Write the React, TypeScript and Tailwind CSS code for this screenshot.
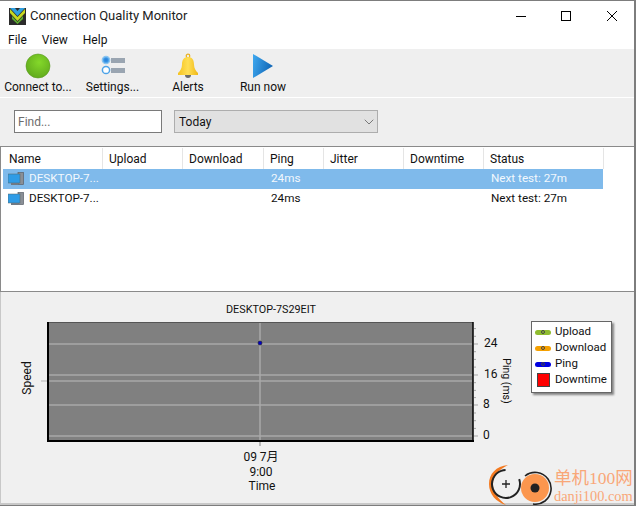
import { ChevronDown } from "lucide-react";

const uiFont = "font-['Roboto','Noto_Sans_CJK_SC',sans-serif]";

const columns = [
  { name: "Name", width: "w-[100px]" },
  { name: "Upload", width: "w-[80px]" },
  { name: "Download", width: "w-[81px]" },
  { name: "Ping", width: "w-[60px]" },
  { name: "Jitter", width: "w-[80px]" },
  { name: "Downtime", width: "w-[80px]" },
  { name: "Status", width: "w-[120px]" },
];

function AppIcon() {
  return (
    <svg width="17" height="17" viewBox="0 0 17 17" className="shrink-0">
      <rect width="17" height="17" fill="#2b2b2b" />
      <path d="M1 0h5l2.500 3L11 0h5L8.500 8z" fill="#2f9fe0" />
      <path d="M1 1l7.500 8L16 1v4l-7.500 8L1 5z" fill="#c6d820" />
      <path d="M3 8l5.500 6L14 8v3l-5.500 5L3 11z" fill="#5fb030" />
    </svg>
  );
}

function WindowButtons() {
  return (
    <div className="ml-auto mr-[17px] flex items-center">
      <svg width="10" height="10" viewBox="0 0 10 10" className="mr-[35px]">
        <path d="M0 5.500h10" stroke="#000" strokeWidth="1" />
      </svg>
      <svg width="10" height="10" viewBox="0 0 10 10" className="mr-[36px]">
        <rect x="0.500" y="0.500" width="9" height="9" fill="none" stroke="#000" strokeWidth="1" />
      </svg>
      <svg width="10" height="10" viewBox="0 0 10 10">
        <path d="M0 0l10 10M10 0L0 10" stroke="#000" strokeWidth="1" />
      </svg>
    </div>
  );
}

function ConnectIcon() {
  return (
    <svg width="26" height="26" viewBox="0 0 26 26">
      <defs>
        <radialGradient id="green" cx="0.55" cy="0.35" r="0.7">
          <stop offset="0" stopColor="#84d82a" />
          <stop offset="1" stopColor="#5fa81c" />
        </radialGradient>
      </defs>
      <circle cx="13" cy="13" r="12" fill="url(#green)" stroke="#5a9a20" strokeWidth="0.600" />
    </svg>
  );
}

function SettingsIcon() {
  return (
    <svg width="26" height="26" viewBox="0 0 26 26">
      <circle cx="6" cy="7" r="3.600" fill="#3f9be8" stroke="#8ac4f0" strokeWidth="1.500" />
      <circle cx="6" cy="7" r="1.800" fill="#2d86dc" />
      <rect x="11" y="5" width="14" height="5" fill="#9aa5b1" />
      <circle cx="6" cy="17" r="3.600" fill="#fff" stroke="#4da3e8" strokeWidth="1.500" />
      <rect x="11" y="15" width="14" height="5" fill="#9aa5b1" />
    </svg>
  );
}

function BellIcon() {
  return (
    <svg width="22" height="26" viewBox="0 0 22 26">
      <defs>
        <linearGradient id="bell" x1="0" y1="0" x2="1" y2="0">
          <stop offset="0" stopColor="#f5c220" />
          <stop offset="0.500" stopColor="#ffdf55" />
          <stop offset="1" stopColor="#f0b818" />
        </linearGradient>
      </defs>
      <circle cx="11" cy="3" r="1.800" fill="none" stroke="#e8b020" strokeWidth="1.200" />
      <path d="M8 22a3 3 0 0 0 6 0z" fill="#6b6b6b" />
      <path d="M11 4c-4.500 0-6 3.500-6 7.500 0 4-2 6.500-4 8.500v2h20v-2c-2-2-4-4.500-4-8.500C17 7.500 15.500 4 11 4z" fill="url(#bell)" />
    </svg>
  );
}

function PlayIcon() {
  return (
    <svg width="20" height="24" viewBox="0 0 20 24">
      <defs>
        <linearGradient id="play" x1="0" y1="0" x2="1" y2="0.300">
          <stop offset="0" stopColor="#3fa9f0" />
          <stop offset="1" stopColor="#1268b8" />
        </linearGradient>
      </defs>
      <path d="M0 0l20 12L0 24z" fill="url(#play)" />
    </svg>
  );
}

function PcIcon() {
  return (
    <svg width="16" height="14" viewBox="0 0 16 14" className="shrink-0">
      <rect x="10" y="0.500" width="5.500" height="12" fill="#8a8f96" stroke="#5b6068" strokeWidth="0.700" />
      <rect x="0" y="2" width="12" height="9" fill="#2f9ce6" stroke="#566" strokeWidth="0.500" />
      <rect x="3" y="11" width="7" height="2" fill="#6f7a85" />
    </svg>
  );
}

function ToolButton({ label, width, children }: { label: string; width: string; children: React.ReactNode }) {
  return (
    <div className={`${width} flex shrink-0 flex-col items-center`}>
      <div className="flex h-[26px] items-center justify-center">{children}</div>
      <span className="whitespace-nowrap leading-[16px]">{label}</span>
    </div>
  );
}

function Row({ selected }: { selected?: boolean }) {
  return (
    <div className={`flex h-5 w-[600px] items-center text-[11.700px] ${selected ? "bg-[#7fbaeb] text-[#f2f8fd]" : ""}`}>
      <div className="flex w-[100px] items-center pl-[5px]">
        <PcIcon />
        <span className="ml-[5px] whitespace-nowrap">DESKTOP-7...</span>
      </div>
      <div className="w-[161px]" />
      <div className="w-[60px] pl-[7px]">24ms</div>
      <div className="w-[160px]" />
      <div className="w-[119px] whitespace-nowrap pl-[7px]">Next test: 27m</div>
    </div>
  );
}

function Chart() {
  const minor = [328.6, 336.3, 351.7, 359.4, 367.1, 382.7, 390.4, 397.6, 413, 420.7, 428.4];
  const major = [344, 375, 405, 436];
  return (
    <svg width="500" height="180" viewBox="20 318 500 180" className="shrink-0 text-[12px]">
      <rect x="47" y="322" width="426" height="119" fill="#808080" />
      {[344, 375, 381, 405, 436].map((y) => (
        <line key={y} x1="49" x2="472" y1={y} y2={y} stroke="#a9a9a9" strokeWidth="1.500" />
      ))}
      <line x1="260" x2="260" y1="323" y2="446" stroke="#a9a9a9" strokeWidth="1.500" />
      <line x1="41" x2="47" y1="381" y2="381" stroke="#b5b5b5" strokeWidth="1" />
      <line x1="47" x2="473" y1="322.500" y2="322.500" stroke="#555" strokeWidth="1" />
      <line x1="48" x2="48" y1="322" y2="442" stroke="#000" strokeWidth="2" />
      <line x1="47" x2="474" y1="441" y2="441" stroke="#000" strokeWidth="2" />
      <line x1="473" x2="473" y1="322" y2="442" stroke="#000" strokeWidth="1.500" />
      {minor.map((y) => (
        <line key={y} x1="474" x2="476" y1={y} y2={y} stroke="#a5a5a5" strokeWidth="1" />
      ))}
      {major.map((y) => (
        <line key={y} x1="474" x2="478" y1={y} y2={y} stroke="#a5a5a5" strokeWidth="1" />
      ))}
      <circle cx="260" cy="343" r="2" fill="#0000c8" stroke="#222" strokeWidth="0.600" />
      <text x="484" y="347" fill="#111">24</text>
      <text x="484" y="378" fill="#111">16</text>
      <text x="483" y="408" fill="#111">8</text>
      <text x="483" y="439" fill="#111">0</text>
      <text x="0" y="0" fill="#111" textAnchor="middle" className="text-[10.500px]" transform="translate(503 381) rotate(90)">Ping (ms)</text>
      <text x="0" y="0" fill="#111" textAnchor="middle" transform="translate(31 378) rotate(-90)">Speed</text>
      <text x="261" y="461" fill="#111" textAnchor="middle">09 7月</text>
      <text x="261" y="476" fill="#111" textAnchor="middle">9:00</text>
      <text x="262" y="490" fill="#111" textAnchor="middle">Time</text>
    </svg>
  );
}

function LegendLine({ color, label }: { color: string; label: string }) {
  return (
    <div className="flex h-4 items-center whitespace-nowrap">
      <span className="relative mr-[4px] h-[5px] w-4 shrink-0 rounded-full" style={{ backgroundColor: color }}>
        <span className="absolute left-[6px] top-[0.500px] h-[4px] w-[4px] rounded-full border border-[#444]" />
      </span>
      {label}
    </div>
  );
}

function Watermark() {
  return (
    <div className="absolute bottom-[-3px] left-[487px] flex h-[42px] items-start">
      <svg width="64" height="42" viewBox="0 0 64 42" className="shrink-0">
        <path d="M20 1C8 2 1 10 1 20c0 10 7 18 17 21C10 35 5 28 5 20 5 12 10 6 20 1z" fill="#f47a20" />
        <circle cx="18" cy="20" r="14" fill="none" stroke="#222" strokeWidth="2" strokeDasharray="70 18" transform="rotate(-20 18 20)" />
        <path d="M14 20h8M18 16v8" stroke="#222" strokeWidth="1.300" />
        <circle cx="47" cy="24" r="14" fill="#fb964e" />
        <path d="M37 12a16 16 0 0 1 23 3 16 16 0 0 1-3 22 16 16 0 0 1-12 3" fill="none" stroke="#222" strokeWidth="1.600" />
        <circle cx="47" cy="24" r="4.500" fill="#222" />
      </svg>
      <div className="ml-[2px] mt-[3px] flex flex-col text-[#f9a778]">
        <span className="whitespace-nowrap font-['Liberation_Serif','Noto_Sans_CJK_SC',serif] text-[17.500px] leading-[22px]">单机100网</span>
        <span className="whitespace-nowrap font-['Liberation_Serif',serif] text-[14.400px] leading-[15px]">danji100.com</span>
      </div>
    </div>
  );
}

export default function App() {
  return (
    <div className={`${uiFont} relative h-[506px] w-[636px] overflow-hidden border-t border-r-2 border-b border-[#7d7d7d] bg-[#f0f0f0] text-[12px] text-[#111]`}>
      {/* title bar */}
      <div className="flex h-[30px] items-center bg-white pl-[9px]">
        <AppIcon />
        <span className="ml-1 text-[13px] text-[#222]">Connection Quality Monitor</span>
        <WindowButtons />
      </div>

      {/* menu */}
      <div className="flex h-[18px] items-center gap-[15px] bg-white pl-2 leading-none">
        <span>File</span>
        <span>View</span>
        <span>Help</span>
      </div>

      {/* toolbar */}
      <div className="flex h-[49px] items-start border-b border-white bg-[#efefef] pt-[4px]">
        <ToolButton label="Connect to..." width="w-[76px]"><ConnectIcon /></ToolButton>
        <ToolButton label="Settings..." width="w-[73px]"><SettingsIcon /></ToolButton>
        <ToolButton label="Alerts" width="w-[78px]"><BellIcon /></ToolButton>
        <ToolButton label="Run now" width="w-[72px]"><PlayIcon /></ToolButton>
      </div>

      {/* filter */}
      <div className="flex h-[48px] items-start bg-[#efefef] pl-[14px] pt-3">
        <div className="flex h-[23px] w-[148px] items-center border border-[#7a7a7a] bg-white pl-[3px] pt-[1px] text-[#6d6d6d]">Find...</div>
        <div className="ml-3 flex h-[23px] w-[204px] items-center justify-between border border-[#adadad] bg-[#e1e1e1] pl-1 pt-[1px]">
          <span>Today</span>
          <ChevronDown size={16} strokeWidth={1} className="text-[#444]" />
        </div>
      </div>

      {/* list */}
      <div className="h-[146px] border-t border-l border-b border-[#8a8a8a] bg-white pl-[2px] pt-[1px]">
        <div className="flex h-[21px]">
          {columns.map((c) => (
            <div key={c.name} className={`${c.width} flex items-center border-r border-[#e5e5e5] pl-[6px]`}>
              {c.name}
            </div>
          ))}
        </div>
        <Row selected />
        <Row />
      </div>

      {/* chart */}
      <div className="relative flex h-[213px] flex-col border-l border-b-2 border-[#c8c8c8] bg-[#f0f0f0]">
        <div className="pl-[225px] pt-[10px] text-[10.800px] leading-[16px]">DESKTOP-7S29EIT</div>
        <div className="flex items-start">
          <div className="ml-[19px]"><Chart /></div>
          <div className="ml-[11px] mt-[3px] flex h-[72px] w-[81px] flex-col border border-[#666] bg-white px-[3px] pt-[2px] text-[11.500px] shadow-[2px_2px_2px_rgba(0,0,0,0.45)]">
            <LegendLine color="#8fbc2f" label="Upload" />
            <LegendLine color="#f5a000" label="Download" />
            <LegendLine color="#0000e0" label="Ping" />
            <div className="flex h-4 items-center whitespace-nowrap">
              <span className="ml-[2px] mr-[5px] h-[14px] w-[13px] shrink-0 border border-[#444] bg-[#ff0000]" />
              Downtime
            </div>
          </div>
        </div>
        <Watermark />
      </div>
    </div>
  );
}
